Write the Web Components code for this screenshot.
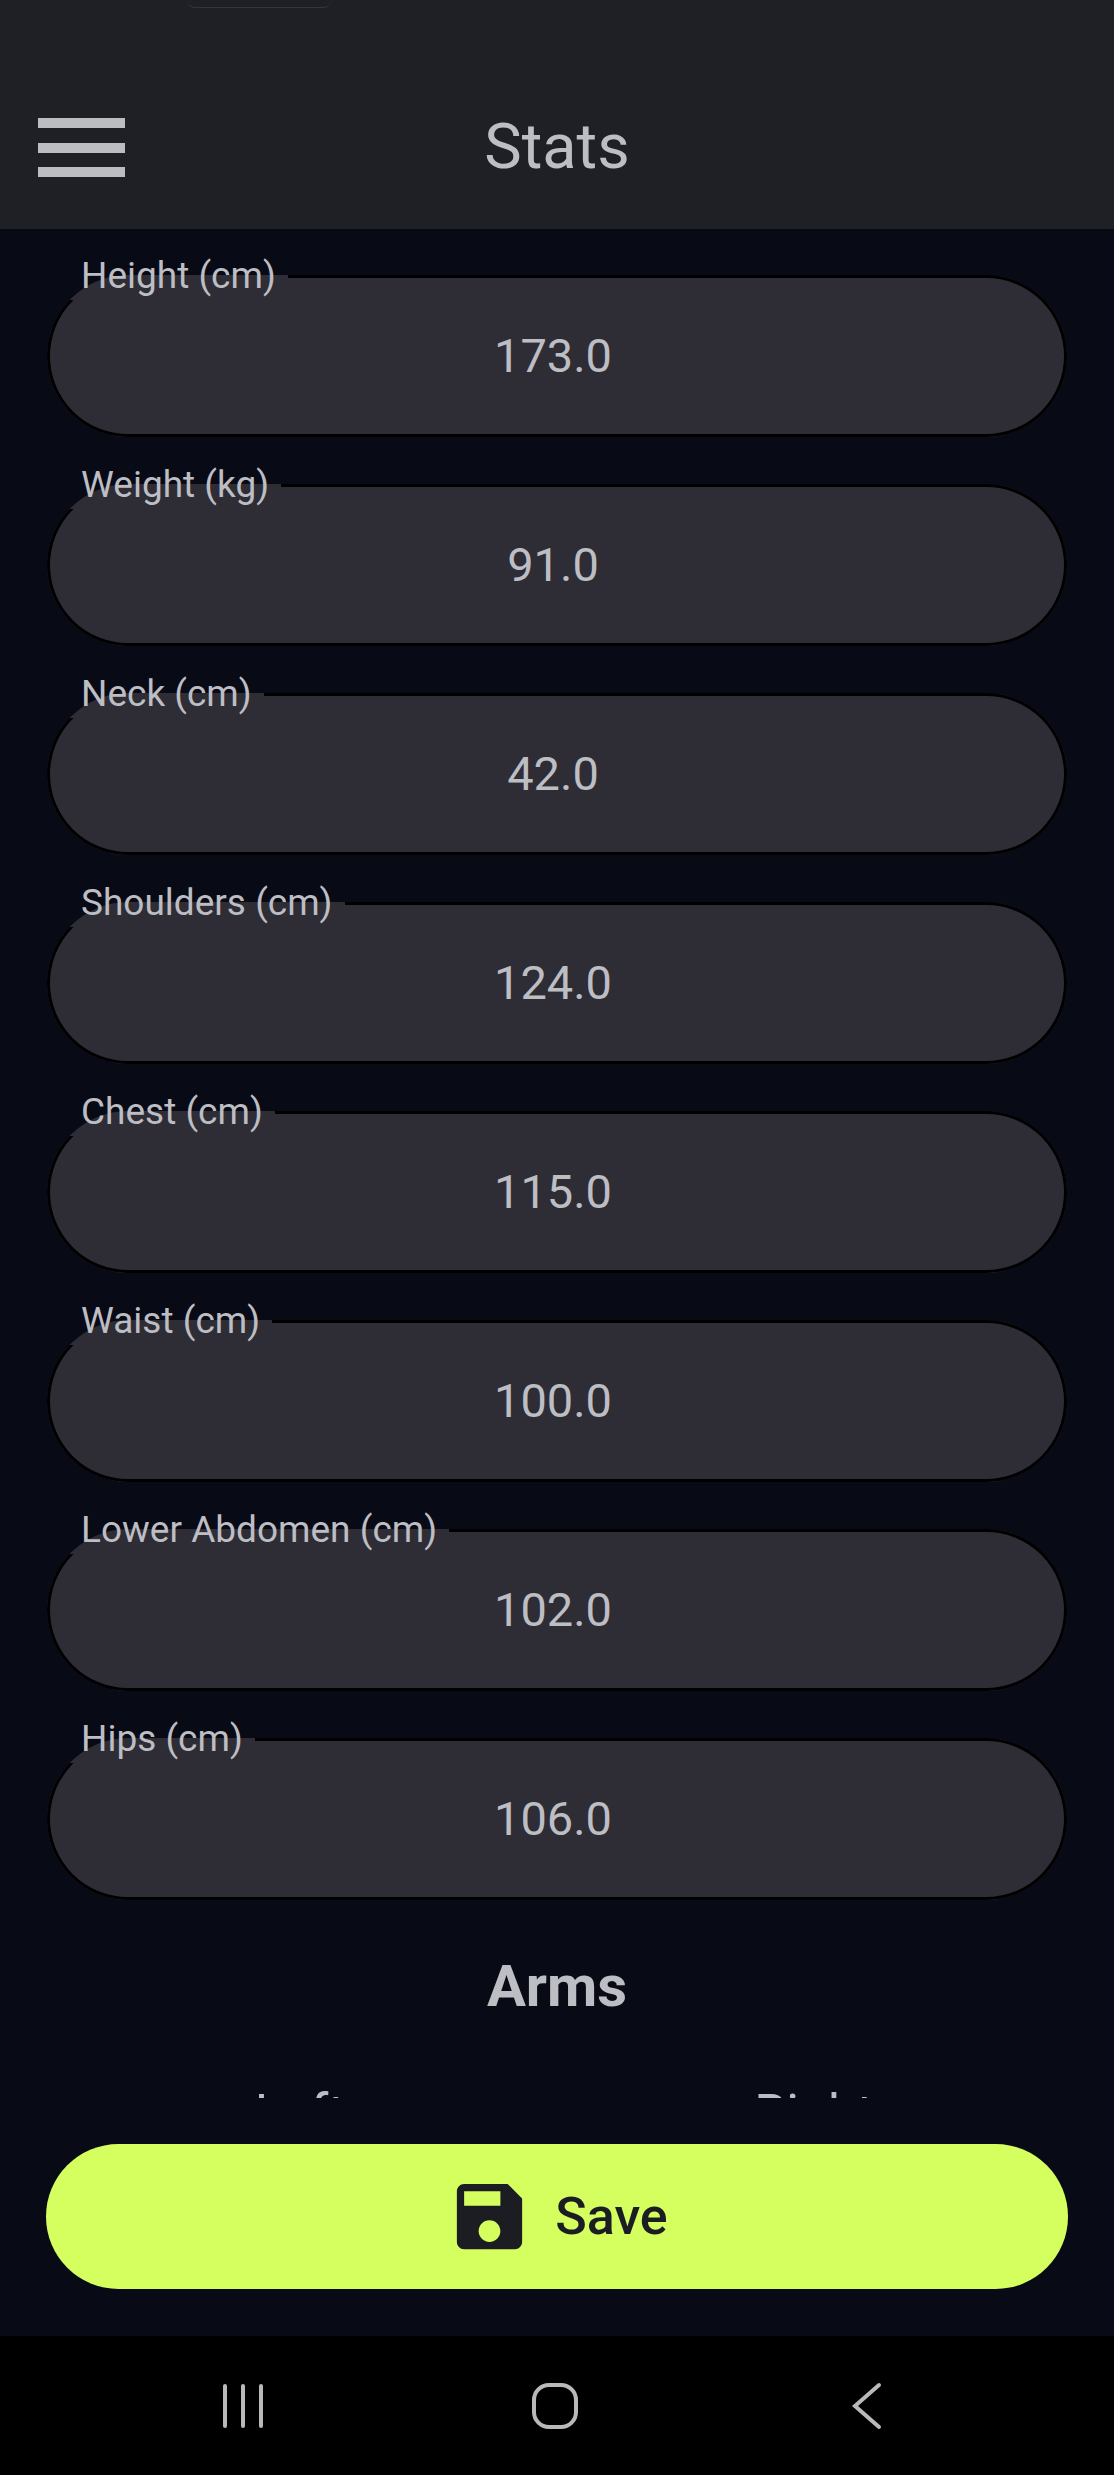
<!DOCTYPE html>
<html lang="en">
<head>
  <meta charset="utf-8">
  <meta name="viewport" content="width=device-width, initial-scale=1">
  <title>Stats</title>
  <style>
    html, body {
      height: 100%;
      margin: 0;
    }
    body {
      --page: #080a15;
      --bar: #1f2025;
      --field: #2e2d35;
      --text: #bdbdc4;
      --accent: #d4ff5f;
      background: var(--page);
      color: var(--text);
      font-family: Roboto, "Liberation Sans", sans-serif;
    }
  </style>
</head>
<body>

  <template id="statsAppTemplate">
    <style>
      :host {
        display: flex;
        flex-direction: column;
        height: 100%;
      }
      main {
        flex: 1;
        min-height: 0;
        overflow-y: auto;
        scrollbar-width: none;
        padding: 23px 47px 0;
        box-sizing: border-box;
      }
      footer {
        padding: 46px 46px 47px;
      }
    </style>
    <slot name="bar"></slot>
    <main><slot></slot></main>
    <footer><slot name="action"></slot></footer>
    <slot name="nav"></slot>
  </template>

  <template id="appBarTemplate">
    <style>
      :host {
        display: block;
        background: var(--bar);
      }
      .status {
        height: 66px;
      }
      .toast {
        box-sizing: border-box;
        width: 144px;
        height: 8px;
        margin-left: 187px;
        border-bottom: 1px solid #35363c;
        border-radius: 0 0 8px 8px;
      }
      .toolbar {
        display: grid;
        grid-template-columns: 1fr auto 1fr;
        align-items: center;
        height: 163px;
        padding: 0 38px;
      }
      button {
        justify-self: start;
        padding: 0;
        border: 0;
        background: none;
        color: #bcbdc1;
      }
      svg {
        display: block;
      }
      h1 {
        margin: 0;
        padding-bottom: 2px;
        font-size: 63px;
        font-weight: 400;
        line-height: 72px;
      }
    </style>
    <div class="status"><div class="toast"></div></div>
    <div class="toolbar">
      <button type="button" aria-label="Open menu">
        <svg width="87" height="59" viewBox="0 0 87 59" fill="currentColor">
          <path d="M0 0h87v10H0zM0 25h87v10H0zM0 49h87v10H0z"/>
        </svg>
      </button>
      <h1><slot></slot></h1>
    </div>
  </template>

  <template id="statFieldTemplate">
    <style>
      :host {
        display: block;
        margin-bottom: 24px;
      }
      /* the legend cuts the notch in the outline */
      fieldset {
        min-width: 0;
        margin: 0;
        padding: 0;
        border: 3px solid #000;
        border-radius: 81px;
        background: var(--field);
      }
      legend {
        margin-left: 19px;
        padding: 0 12px;
        font-size: 37px;
        line-height: 48px;
      }
      label {
        display: block;
      }
      input {
        display: block;
        box-sizing: border-box;
        width: 100%;
        height: 134px;
        margin: 0;
        padding: 0 8px 24px 0;
        border: 0;
        outline: 0;
        background: none;
        color: inherit;
        font-family: inherit;
        font-size: 47px;
        text-align: center;
      }
    </style>
    <fieldset>
      <legend><label for="value"><slot></slot></label></legend>
      <input id="value" type="text" inputmode="decimal">
    </fieldset>
  </template>

  <template id="statSectionTemplate">
    <style>
      :host {
        display: block;
        padding-top: 29px;
      }
      h2 {
        margin: 0 0 65px;
        font-size: 58px;
        font-weight: 700;
        line-height: 66px;
        text-align: center;
      }
      .sides {
        display: grid;
        grid-template-columns: 1fr 1fr;
        gap: 8px;
        font-size: 52px;
        line-height: 60px;
        text-align: center;
      }
    </style>
    <h2><slot></slot></h2>
    <div class="sides">
      <slot name="left"></slot>
      <slot name="right"></slot>
    </div>
  </template>

  <template id="saveButtonTemplate">
    <style>
      :host {
        display: block;
      }
      button {
        display: flex;
        align-items: center;
        justify-content: center;
        gap: 22px;
        width: 100%;
        height: 145px;
        padding: 0;
        border: 0;
        border-radius: 73px;
        background: var(--accent);
        color: #1c1d23;
        font-family: inherit;
        font-size: 52px;
        font-weight: 500;
      }
    </style>
    <button type="button">
      <svg width="87" height="87" viewBox="0 0 24 24" fill="currentColor" aria-hidden="true">
        <path d="M17 3H5c-1.110 0-2 .9-2 2v14c0 1.100.890 2 2 2h14c1.100 0 2-.9 2-2V7l-4-4zm-5 16c-1.660 0-3-1.340-3-3s1.340-3 3-3 3 1.340 3 3-1.340 3-3 3zm3-10H5V5h10v4z"/>
      </svg>
      <span><slot></slot></span>
    </button>
  </template>

  <template id="systemNavTemplate">
    <style>
      :host {
        display: block;
        background: #000;
      }
      nav {
        display: flex;
        justify-content: center;
        height: 139px;
      }
      button {
        display: flex;
        align-items: center;
        justify-content: center;
        width: 28%;
        padding: 0;
        border: 0;
        background: none;
        color: #b9b9bc;
      }
      svg {
        margin-right: 4px;
        fill: none;
        stroke: currentColor;
        stroke-width: 4;
        stroke-linecap: round;
      }
    </style>
    <nav aria-label="System">
      <button type="button" aria-label="Recent apps">
        <svg width="50" height="50" viewBox="0 0 50 50"><path d="M7 5v40M25 5v40M43 5v40"/></svg>
      </button>
      <button type="button" aria-label="Home">
        <svg width="50" height="50" viewBox="0 0 50 50"><rect x="4" y="4" width="42" height="42" rx="15"/></svg>
      </button>
      <button type="button" aria-label="Back">
        <svg width="50" height="50" viewBox="0 0 50 50"><path d="M37 4L13 25l24 21"/></svg>
      </button>
    </nav>
  </template>

  <stats-app>
    <app-bar slot="bar">Stats</app-bar>

    <stat-field value="173.0">Height (cm)</stat-field>
    <stat-field value="91.0">Weight (kg)</stat-field>
    <stat-field value="42.0">Neck (cm)</stat-field>
    <stat-field value="124.0">Shoulders (cm)</stat-field>
    <stat-field value="115.0">Chest (cm)</stat-field>
    <stat-field value="100.0">Waist (cm)</stat-field>
    <stat-field value="102.0">Lower Abdomen (cm)</stat-field>
    <stat-field value="106.0">Hips (cm)</stat-field>

    <stat-section>
      Arms
      <span slot="left">Left</span>
      <span slot="right">Right</span>
    </stat-section>

    <save-button slot="action">Save</save-button>
    <system-nav slot="nav"></system-nav>
  </stats-app>

  <script>
    class TemplateElement extends HTMLElement {
      constructor() {
        super();
        const template = document.getElementById(this.constructor.template);
        this.attachShadow({ mode: "open" });
        this.shadowRoot.appendChild(template.content.cloneNode(true));
      }
    }

    class StatsApp extends TemplateElement {
      static template = "statsAppTemplate";
    }

    class AppBar extends TemplateElement {
      static template = "appBarTemplate";
    }

    class StatField extends TemplateElement {
      static template = "statFieldTemplate";

      connectedCallback() {
        this.shadowRoot.querySelector("input").value = this.getAttribute("value") || "";
      }

      get value() {
        return this.shadowRoot.querySelector("input").value;
      }
    }

    class StatSection extends TemplateElement {
      static template = "statSectionTemplate";
    }

    class SaveButton extends TemplateElement {
      static template = "saveButtonTemplate";
    }

    class SystemNav extends TemplateElement {
      static template = "systemNavTemplate";
    }

    customElements.define("stats-app", StatsApp);
    customElements.define("app-bar", AppBar);
    customElements.define("stat-field", StatField);
    customElements.define("stat-section", StatSection);
    customElements.define("save-button", SaveButton);
    customElements.define("system-nav", SystemNav);
  </script>
</body>
</html>
